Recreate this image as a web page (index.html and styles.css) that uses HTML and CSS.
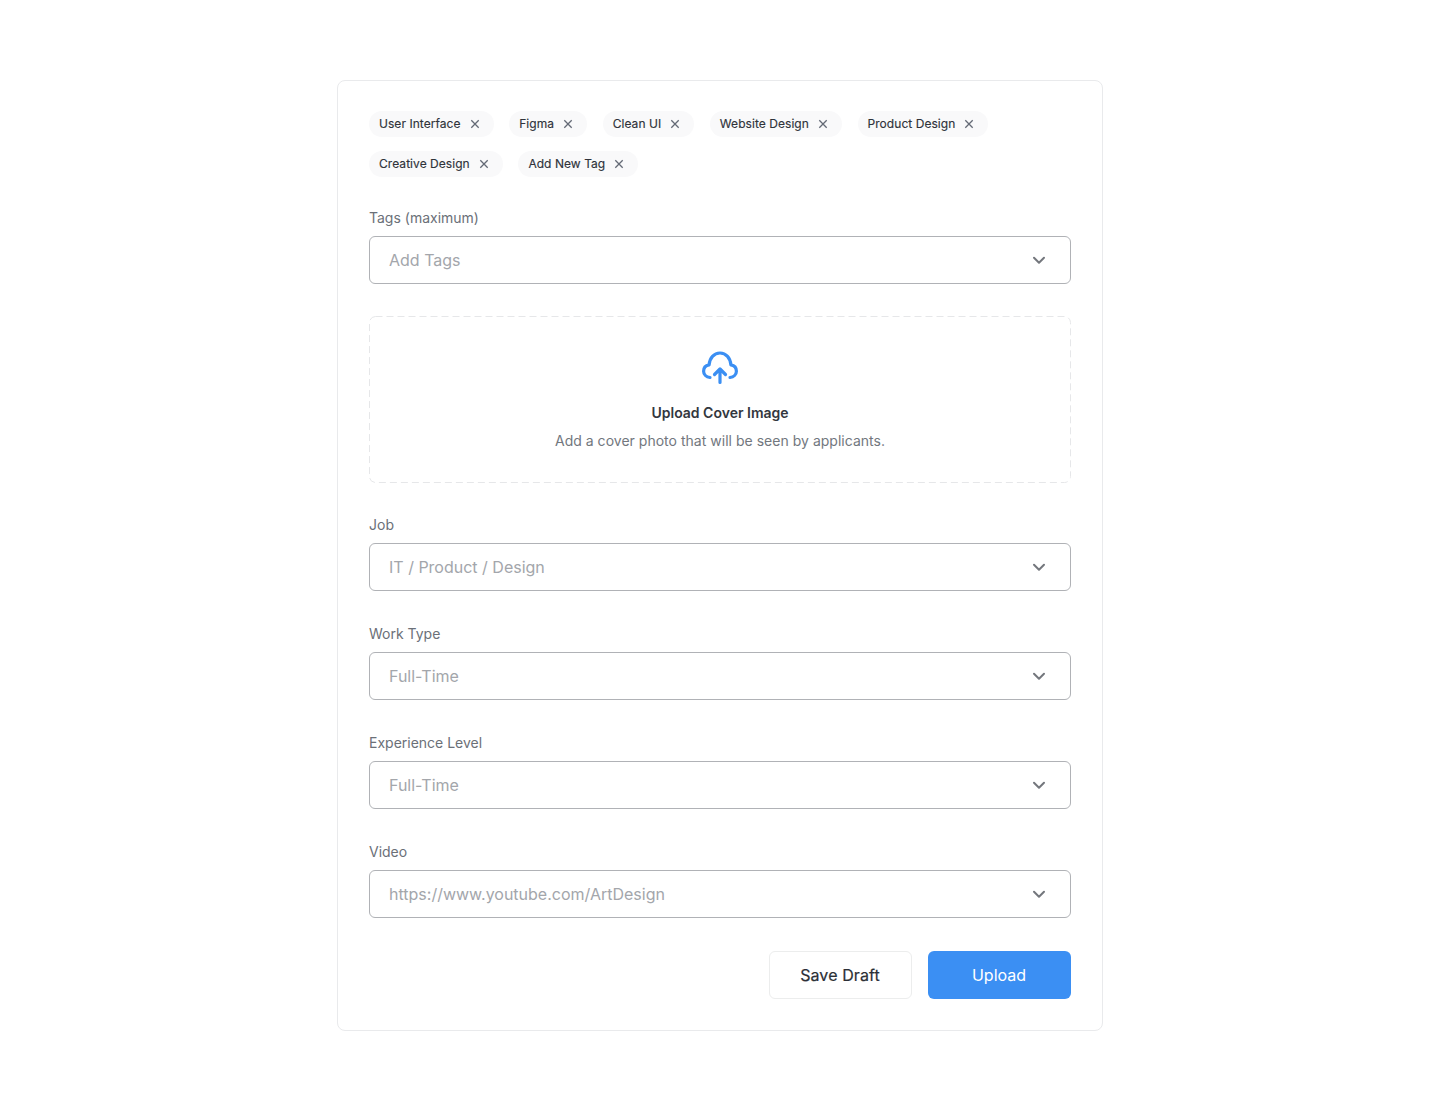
FILE: index.html
```html
<!DOCTYPE html>
<html lang="en">
<head>
<meta charset="utf-8">
<title>Upload</title>
<link rel="stylesheet" href="styles.css">
</head>
<body>
<svg class="defs" width="0" height="0" aria-hidden="true">
  <symbol id="x" viewBox="0 0 10 10"><path d="M1.300 1.300l7.400 7.400M8.700 1.300L1.300 8.700" fill="none" stroke="currentColor" stroke-width="1.300"/></symbol>
  <symbol id="chev" viewBox="0 0 14 9"><path d="M2 1.700l5 5 5-5" fill="none" stroke="currentColor" stroke-width="2" stroke-linecap="round" stroke-linejoin="round"/></symbol>
</svg>
<main class="card">
  <div class="tags">
    <span class="tag"><span class="tag-text">User Interface</span><svg class="tag-x"><use href="#x"/></svg></span>
    <span class="tag"><span class="tag-text">Figma</span><svg class="tag-x"><use href="#x"/></svg></span>
    <span class="tag"><span class="tag-text">Clean UI</span><svg class="tag-x"><use href="#x"/></svg></span>
    <span class="tag"><span class="tag-text">Website Design</span><svg class="tag-x"><use href="#x"/></svg></span>
    <span class="tag"><span class="tag-text">Product Design</span><svg class="tag-x"><use href="#x"/></svg></span>
    <span class="tag"><span class="tag-text">Creative Design</span><svg class="tag-x"><use href="#x"/></svg></span>
    <span class="tag"><span class="tag-text">Add New Tag</span><svg class="tag-x"><use href="#x"/></svg></span>
  </div>

  <div class="field first">
    <div class="label">Tags (maximum)</div>
    <div class="select"><span>Add Tags</span><svg class="chev"><use href="#chev"/></svg></div>
  </div>

  <div class="drop">
    <svg class="drop-border" aria-hidden="true"><rect class="drop-rect" rx="6"/></svg>
    <svg class="cloud" viewBox="0 0 36 34" fill="none" stroke="#3b8ff3" stroke-width="3.200" stroke-linecap="round" stroke-linejoin="round">
      <path d="M8 26.500C4.300 26 1.600 23.500 1.600 20.200c0-3.300 2.400-5.700 5.500-6.300C7.600 7 12 2 18 2s10.400 5 10.900 11.900c3.100.6 5.500 3 5.500 6.300 0 3.300-2.700 5.800-6.400 6.300"/>
      <path d="M18 31.500V18M12.500 23.500L18 18l5.500 5.500"/>
    </svg>
    <div class="drop-title">Upload Cover Image</div>
    <div class="drop-sub">Add a cover photo that will be seen by applicants.</div>
  </div>

  <div class="field">
    <div class="label">Job</div>
    <div class="select"><span>IT / Product / Design</span><svg class="chev"><use href="#chev"/></svg></div>
  </div>
  <div class="field">
    <div class="label">Work Type</div>
    <div class="select"><span>Full-Time</span><svg class="chev"><use href="#chev"/></svg></div>
  </div>
  <div class="field">
    <div class="label">Experience Level</div>
    <div class="select"><span>Full-Time</span><svg class="chev"><use href="#chev"/></svg></div>
  </div>
  <div class="field">
    <div class="label">Video</div>
    <div class="select"><span>https://www.youtube.com/ArtDesign</span><svg class="chev"><use href="#chev"/></svg></div>
  </div>

  <div class="actions">
    <button class="btn draft" type="button">Save Draft</button>
    <button class="btn upload" type="button">Upload</button>
  </div>
</main>
</body>
</html>
```
FILE: styles.css
```css
* { box-sizing: border-box; }
html, body { margin: 0; padding: 0; background: #fff; }
body {
  height: 1111px;
  padding-top: 80px;
  font-family: Inter, "Liberation Sans", sans-serif;
  color: #2b2f36;
}
.defs { position: absolute; }
.card {
  width: 766px;
  height: 951px;
  margin: 0 auto;
  padding: 30px 31px 31px;
  border: 1px solid #e9eaec;
  border-radius: 8px;
  background: #fff;
}
.tags {
  display: flex;
  flex-wrap: wrap;
  gap: 14px 15.650px;
}
.tag {
  display: inline-flex;
  align-items: center;
  height: 26px;
  padding: 0 14px 0 10px;
  border-radius: 13px;
  background: #f9f9fa;
  font-size: 12px;
  font-weight: 400;
  letter-spacing: 0.050px;
  color: #2f333a;
  white-space: nowrap;
}
.tag-text {
  margin-top: -1px;
  -webkit-text-stroke: 0.15px #2f333a;
}
.tag-x {
  width: 10px;
  height: 10px;
  margin-left: 9px;
  color: #646a76;
}
.field { margin-top: 33px; }
.field.first { margin-top: 31px; }
.label {
  height: 20px;
  margin-bottom: 8px;
  font-size: 14px;
  line-height: 20px;
  color: #6b7078;
}
.select {
  display: flex;
  align-items: center;
  justify-content: space-between;
  height: 48px;
  padding: 0 24px 0 19px;
  border: 1px solid #b0b2b6;
  border-radius: 6px;
  font-size: 16px;
  color: #a3a6ab;
}
.chev {
  width: 14px;
  height: 9px;
  color: #74777d;
}
.drop {
  position: relative;
  display: flex;
  flex-direction: column;
  align-items: center;
  height: 167px;
  margin-top: 32px;
  margin-bottom: -1px;
  padding-top: 35px;
}
.drop-border {
  position: absolute;
  top: 0;
  left: 0;
  width: 100%;
  height: 100%;
}
.drop-rect {
  x: 0.500px;
  y: 0.500px;
  width: calc(100% - 1px);
  height: calc(100% - 1px);
  fill: none;
  stroke: #e6e7e9;
  stroke-width: 1px;
  stroke-dasharray: 7 4;
}
.cloud {
  display: block;
  width: 36px;
  height: 34px;
}
.drop-title {
  margin-top: 18px;
  font-size: 14px;
  line-height: 20px;
  font-weight: 600;
  color: #33373e;
}
.drop-sub {
  margin-top: 8px;
  font-size: 14px;
  line-height: 20px;
  color: #72777e;
  letter-spacing: 0.020px;
}
.actions {
  display: flex;
  justify-content: flex-end;
  gap: 16px;
  margin-top: 33px;
}
.btn {
  width: 143px;
  height: 48px;
  padding: 0 1px 0 0;
  border-radius: 6px;
  font: 400 16px Inter, "Liberation Sans", sans-serif;
  cursor: pointer;
}
.draft {
  border: 1px solid #eceded;
  background: #fff;
  color: #2b2f36;
  letter-spacing: 0.100px;
  -webkit-text-stroke: 0.2px #2b2f36;
}
.upload {
  border: 0;
  background: #3b8ff3;
  color: #fff;
}
```
